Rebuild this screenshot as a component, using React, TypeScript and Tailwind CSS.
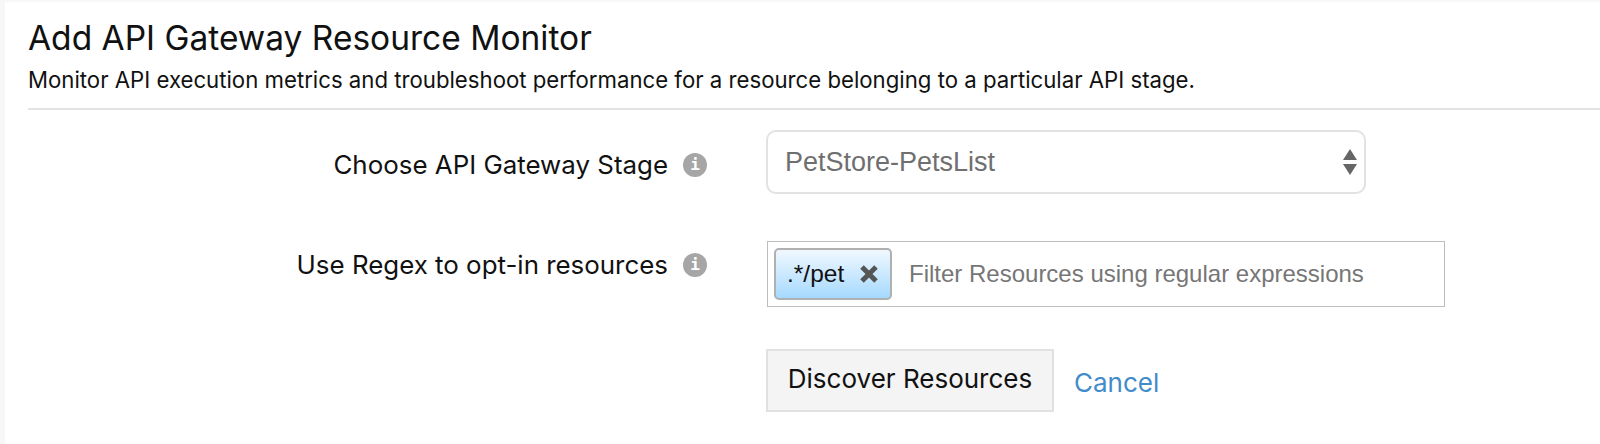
function InfoIcon() {
  return (
    <span className="flex h-6 w-6 items-center justify-center rounded-full bg-[#a6a6a6] font-['DejaVu_Sans_Mono',monospace] text-[16px] font-bold leading-none text-white">
      i
    </span>
  )
}

function FormLabel({ text }: { text: string }) {
  return (
    <div className="flex w-[707px] items-center justify-end gap-[15px] pr-[24px] text-[25.9px] leading-[30px] text-[#111]">
      <span>{text}</span>
      <InfoIcon />
    </div>
  )
}

export default function App() {
  return (
    <div className="h-[444px] w-[1600px] overflow-hidden bg-[#f7f7f7] pl-[5px] pt-[2px] font-['Inter',sans-serif]">
      <div className="h-full bg-white pl-[23px]">
        <div className="border-b-2 border-[#e3e3e3] pl-0 pt-[16px] pb-[15px]">
          <h1 className="text-[33.5px] leading-[40px] text-[#111]">Add API Gateway Resource Monitor</h1>
          <p className="mt-[9px] text-[22.2px] leading-[26px] text-[#111]">
            Monitor API execution metrics and troubleshoot performance for a resource belonging to a particular API stage.
          </p>
        </div>

        <div className="-ml-[4px] mt-[20px] flex items-start">
          <div className="pt-[20px]">
            <FormLabel text="Choose API Gateway Stage" />
          </div>
          <div className="ml-[35px] flex h-[64px] w-[600px] items-center justify-between rounded-[10px] border-2 border-[#e2e2e2] pl-[17px] pr-[7px] font-['Liberation_Sans',sans-serif] text-[27px] text-[#6f6f6f]">
            <span>PetStore-PetsList</span>
            <svg width="14" height="26" viewBox="0 0 14 26" className="fill-[#666]">
              <path d="M7 0 L14 11 H0 Z" />
              <path d="M0 15 H14 L7 26 Z" />
            </svg>
          </div>
        </div>

        <div className="-ml-[4px] mt-[47px] flex items-start">
          <div className="pt-[9px]">
            <FormLabel text="Use Regex to opt-in resources" />
          </div>
          <div className="ml-[36px] flex h-[66px] w-[678px] items-center border border-[#bdbdbd] pl-[6px] font-['Liberation_Sans',sans-serif]">
            <span className="flex h-[52px] w-[118px] items-center rounded-[5px] border-2 border-[#b0b0b0] bg-gradient-to-b from-[#f0f8ff] to-[#a5d9ff] pl-[11px] text-[24.5px] text-[#111]">
              .*/pet
              <svg width="20" height="20" viewBox="0 0 20 20" className="ml-[15px] stroke-[#555]">
                <path d="M3 3 L17 17 M17 3 L3 17" strokeWidth="5" />
              </svg>
            </span>
            <span className="ml-[17px] text-[24px] text-[#767676]">Filter Resources using regular expressions</span>
          </div>
        </div>

        <div className="ml-[738px] mt-[42px] flex items-center">
          <button className="h-[63px] w-[288px] border-2 border-[#e1e1e1] bg-[#f4f4f4] pb-[5px] text-[26px] text-[#111]">
            Discover Resources
          </button>
          <a className="ml-[20px] mt-[4px] text-[26px] text-[#428bca]">Cancel</a>
        </div>
      </div>
    </div>
  )
}
